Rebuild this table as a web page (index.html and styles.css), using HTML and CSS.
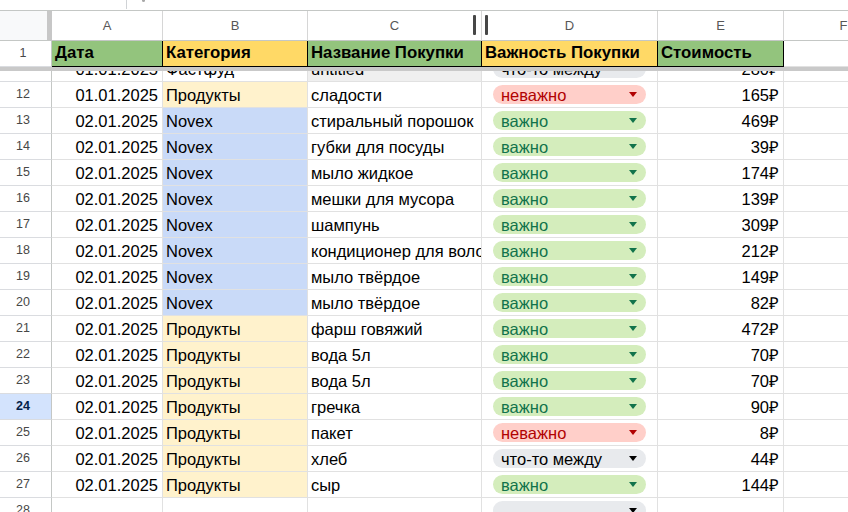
FILE: index.html
```
<!DOCTYPE html>
<html lang="ru">
<head>
<meta charset="utf-8">
<link rel="stylesheet" href="styles.css">
</head>
<body>
<div class="sheet">
  <div class="topstrip"><span class="tick"></span><span class="dot"></span></div>

  <div class="row colhead">
    <div class="corner"></div>
    <div class="ch">A</div>
    <div class="ch">B</div>
    <div class="ch handle">C<span class="bar bar-l"></span><span class="bar bar-r"></span></div>
    <div class="ch">D</div>
    <div class="ch">E</div>
    <div class="ch">F</div>
  </div>

  <div class="row head">
    <div class="rh">1</div>
    <div class="c hb green">Дата</div>
    <div class="c hb yellow">Категория</div>
    <div class="c hb green">Название Покупки</div>
    <div class="c hb yellow">Важность Покупки</div>
    <div class="c hb green">Стоимость</div>
    <div class="c"></div>
  </div>

  <div class="freeze"></div>

  <div class="viewport">
    <div class="scroll">
      <div class="row"><div class="rh"></div><div class="c num">01.01.2025</div><div class="c">Фастфуд</div><div class="c grey">untitled</div><div class="c chipcell"><div class="chip mid"><span>что-то между</span><i></i></div></div><div class="c num">280₽</div><div class="c"></div></div>
      <div class="row"><div class="rh">12</div><div class="c num">01.01.2025</div><div class="c prod">Продукты</div><div class="c">сладости</div><div class="c chipcell"><div class="chip low"><span>неважно</span><i></i></div></div><div class="c num">165₽</div><div class="c"></div></div>
      <div class="row"><div class="rh">13</div><div class="c num">02.01.2025</div><div class="c novex">Novex</div><div class="c">стиральный порошок</div><div class="c chipcell"><div class="chip high"><span>важно</span><i></i></div></div><div class="c num">469₽</div><div class="c"></div></div>
      <div class="row"><div class="rh">14</div><div class="c num">02.01.2025</div><div class="c novex">Novex</div><div class="c">губки для посуды</div><div class="c chipcell"><div class="chip high"><span>важно</span><i></i></div></div><div class="c num">39₽</div><div class="c"></div></div>
      <div class="row"><div class="rh">15</div><div class="c num">02.01.2025</div><div class="c novex">Novex</div><div class="c">мыло жидкое</div><div class="c chipcell"><div class="chip high"><span>важно</span><i></i></div></div><div class="c num">174₽</div><div class="c"></div></div>
      <div class="row"><div class="rh">16</div><div class="c num">02.01.2025</div><div class="c novex">Novex</div><div class="c">мешки для мусора</div><div class="c chipcell"><div class="chip high"><span>важно</span><i></i></div></div><div class="c num">139₽</div><div class="c"></div></div>
      <div class="row"><div class="rh">17</div><div class="c num">02.01.2025</div><div class="c novex">Novex</div><div class="c">шампунь</div><div class="c chipcell"><div class="chip high"><span>важно</span><i></i></div></div><div class="c num">309₽</div><div class="c"></div></div>
      <div class="row"><div class="rh">18</div><div class="c num">02.01.2025</div><div class="c novex">Novex</div><div class="c">кондиционер для волос</div><div class="c chipcell"><div class="chip high"><span>важно</span><i></i></div></div><div class="c num">212₽</div><div class="c"></div></div>
      <div class="row"><div class="rh">19</div><div class="c num">02.01.2025</div><div class="c novex">Novex</div><div class="c">мыло твёрдое</div><div class="c chipcell"><div class="chip high"><span>важно</span><i></i></div></div><div class="c num">149₽</div><div class="c"></div></div>
      <div class="row"><div class="rh">20</div><div class="c num">02.01.2025</div><div class="c novex">Novex</div><div class="c">мыло твёрдое</div><div class="c chipcell"><div class="chip high"><span>важно</span><i></i></div></div><div class="c num">82₽</div><div class="c"></div></div>
      <div class="row"><div class="rh">21</div><div class="c num">02.01.2025</div><div class="c prod">Продукты</div><div class="c">фарш говяжий</div><div class="c chipcell"><div class="chip high"><span>важно</span><i></i></div></div><div class="c num">472₽</div><div class="c"></div></div>
      <div class="row"><div class="rh">22</div><div class="c num">02.01.2025</div><div class="c prod">Продукты</div><div class="c">вода 5л</div><div class="c chipcell"><div class="chip high"><span>важно</span><i></i></div></div><div class="c num">70₽</div><div class="c"></div></div>
      <div class="row"><div class="rh">23</div><div class="c num">02.01.2025</div><div class="c prod">Продукты</div><div class="c">вода 5л</div><div class="c chipcell"><div class="chip high"><span>важно</span><i></i></div></div><div class="c num">70₽</div><div class="c"></div></div>
      <div class="row"><div class="rh sel">24</div><div class="c num">02.01.2025</div><div class="c prod">Продукты</div><div class="c">гречка</div><div class="c chipcell"><div class="chip high"><span>важно</span><i></i></div></div><div class="c num">90₽</div><div class="c"></div></div>
      <div class="row"><div class="rh">25</div><div class="c num">02.01.2025</div><div class="c prod">Продукты</div><div class="c">пакет</div><div class="c chipcell"><div class="chip low"><span>неважно</span><i></i></div></div><div class="c num">8₽</div><div class="c"></div></div>
      <div class="row"><div class="rh">26</div><div class="c num">02.01.2025</div><div class="c prod">Продукты</div><div class="c">хлеб</div><div class="c chipcell"><div class="chip mid"><span>что-то между</span><i></i></div></div><div class="c num">44₽</div><div class="c"></div></div>
      <div class="row"><div class="rh">27</div><div class="c num">02.01.2025</div><div class="c prod">Продукты</div><div class="c">сыр</div><div class="c chipcell"><div class="chip high"><span>важно</span><i></i></div></div><div class="c num">144₽</div><div class="c"></div></div>
      <div class="row"><div class="rh">28</div><div class="c num"></div><div class="c"></div><div class="c"></div><div class="c chipcell"><div class="chip mid"><span></span><i></i></div></div><div class="c num"></div><div class="c"></div></div>
    </div>
  </div>
</div>
</body>
</html>
```

FILE: styles.css
```
html, body {
  margin: 0;
  padding: 0;
  background: #ffffff;
}

body {
  width: 848px;
  height: 512px;
  overflow: hidden;
  font-family: "Liberation Sans", Arial, sans-serif;
  color: #000;
}

.sheet {
  width: 848px;
  overflow: hidden;
}

.topstrip {
  height: 11px;
  box-sizing: border-box;
  border-bottom: 1px solid #c4c7c5;
  display: flex;
  align-items: flex-start;
  padding-left: 126px;
}

.tick {
  width: 1px;
  height: 9px;
  background: #d0d3d6;
}

.dot {
  width: 3px;
  height: 2px;
  margin-left: 15px;
  background: #a8a8a8;
  border-radius: 0 0 2px 2px;
}

.row {
  display: grid;
  grid-template-columns: 52px 111px 145px 174px 176px 126px 120px;
  height: 26px;
  width: 904px;
}

.colhead {
  height: 30px;
}

.corner {
  box-sizing: border-box;
  background: #f8f9fa;
  border-right: 5px solid #c7c7c7;
  border-bottom: 1px solid #c4c7c5;
}

.ch {
  box-sizing: border-box;
  border-right: 1px solid #d6d6d6;
  border-bottom: 1px solid #c4c7c5;
  text-align: center;
  font-size: 13px;
  line-height: 29px;
  color: #575757;
}

.handle {
  position: relative;
}

.bar {
  position: absolute;
  top: 4px;
  width: 3px;
  height: 20px;
  background: #474747;
  border-radius: 1px;
}

.bar-l {
  right: 5px;
}

.bar-r {
  right: -7px;
  z-index: 2;
}

.rh {
  box-sizing: border-box;
  border-right: 1px solid #c4c7c5;
  border-bottom: 1px solid #dadce0;
  text-align: center;
  padding-right: 5px;
  font-size: 12.5px;
  line-height: 25px;
  color: #474747;
}

.rh.sel {
  background: #d3e3fd;
  font-weight: bold;
  color: #041e49;
}

.c {
  box-sizing: border-box;
  border-right: 1px solid #e1e1e1;
  border-bottom: 1px solid #e1e1e1;
  padding: 2px 3px 0 3px;
  font-size: 16.5px;
  line-height: 22px;
  white-space: nowrap;
  overflow: hidden;
}

.c.num {
  text-align: right;
  padding-right: 4px;
}

.hb {
  font-weight: bold;
  font-size: 16.8px;
  padding-top: 1px;
  border-right-color: #000;
  border-bottom-color: #000;
}

.green {
  background: #93c47d;
}

.yellow {
  background: #ffd966;
}

.prod {
  background: #fff2cc;
}

.novex {
  background: #c9daf8;
}

.grey {
  background: #efefef;
}

.freeze {
  height: 4px;
  background: #c9c9c9;
}

.viewport {
  height: 441px;
  overflow: hidden;
}

.scroll {
  margin-top: -15px;
}

.c.chipcell {
  padding: 3px 11px 0 11px;
}

.chip {
  height: 19px;
  border-radius: 10px;
  display: flex;
  justify-content: space-between;
  align-items: flex-start;
  padding: 0 9px 0 8px;
}

.chip span {
  line-height: 18px;
  margin-top: 1px;
}

.chip i {
  width: 0;
  height: 0;
  margin-top: 7px;
  border-left: 4px solid transparent;
  border-right: 4px solid transparent;
  border-top: 5px solid currentColor;
}

.chip.high {
  background: #d4edbc;
  color: #11734b;
}

.chip.low {
  background: #ffcfc9;
  color: #b10202;
}

.chip.mid {
  background: #e8eaed;
  color: #000;
}
```
